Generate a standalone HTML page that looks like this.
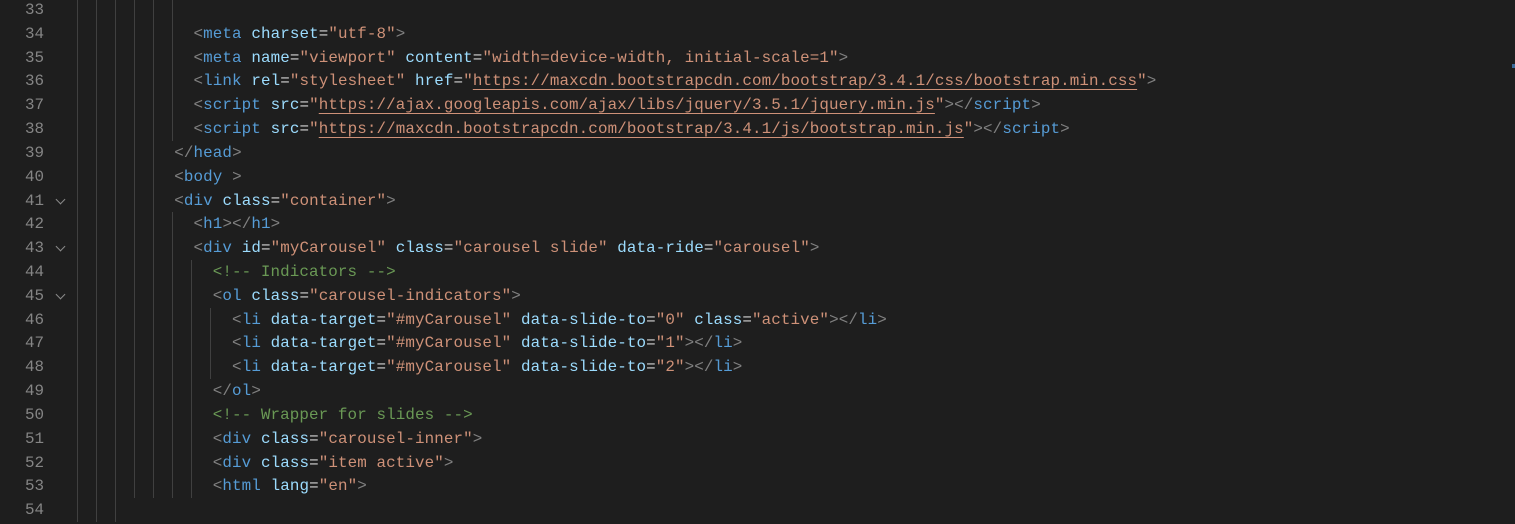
<!DOCTYPE html>
<html><head><meta charset="utf-8"><style>
body{margin:0;width:1515px;height:524px;background:#1e1e1e;overflow:hidden;position:relative;font-family:"Liberation Mono",monospace;font-size:15.87px}
.ln{position:absolute;left:0;width:44px;text-align:right;color:#858585;height:24px;line-height:24px}
.c{position:absolute;left:78px;white-space:pre;height:24px;line-height:24px;color:#d4d4d4;letter-spacing:0.11px}
.g{position:absolute;width:1px;background:#404040}
.b{color:#808080}.t{color:#569cd6}.a{color:#9cdcfe}.s{color:#ce9178}.m{color:#6a9955}
.u{text-decoration:underline;text-decoration-color:#ce9178;text-underline-offset:4px}
.f{position:absolute;left:57px;width:6px;height:6px;border-right:1.3px solid #8a8a8a;border-bottom:1.3px solid #8a8a8a;transform:rotate(45deg)}
</style></head><body>
<div id="root"></div>
<script>
const lines={
33:[6,''],
34:[6,'            <span class=b>&lt;</span><span class=t>meta</span> <span class=a>charset</span>=<span class=s>"utf-8"</span><span class=b>&gt;</span>'],
35:[6,'            <span class=b>&lt;</span><span class=t>meta</span> <span class=a>name</span>=<span class=s>"viewport"</span> <span class=a>content</span>=<span class=s>"width=device-width, initial-scale=1"</span><span class=b>&gt;</span>'],
36:[6,'            <span class=b>&lt;</span><span class=t>link</span> <span class=a>rel</span>=<span class=s>"stylesheet"</span> <span class=a>href</span>=<span class=s>"<span class=u>https://maxcdn.bootstrapcdn.com/bootstrap/3.4.1/css/bootstrap.min.css</span>"</span><span class=b>&gt;</span>'],
37:[6,'            <span class=b>&lt;</span><span class=t>script</span> <span class=a>src</span>=<span class=s>"<span class=u>https://ajax.googleapis.com/ajax/libs/jquery/3.5.1/jquery.min.js</span>"</span><span class=b>&gt;&lt;/</span><span class=t>script</span><span class=b>&gt;</span>'],
38:[6,'            <span class=b>&lt;</span><span class=t>script</span> <span class=a>src</span>=<span class=s>"<span class=u>https://maxcdn.bootstrapcdn.com/bootstrap/3.4.1/js/bootstrap.min.js</span>"</span><span class=b>&gt;&lt;/</span><span class=t>script</span><span class=b>&gt;</span>'],
39:[5,'          <span class=b>&lt;/</span><span class=t>head</span><span class=b>&gt;</span>'],
40:[5,'          <span class=b>&lt;</span><span class=t>body</span> <span class=b>&gt;</span>'],
41:[5,'          <span class=b>&lt;</span><span class=t>div</span> <span class=a>class</span>=<span class=s>"container"</span><span class=b>&gt;</span>'],
42:[6,'            <span class=b>&lt;</span><span class=t>h1</span><span class=b>&gt;&lt;/</span><span class=t>h1</span><span class=b>&gt;</span>'],
43:[6,'            <span class=b>&lt;</span><span class=t>div</span> <span class=a>id</span>=<span class=s>"myCarousel"</span> <span class=a>class</span>=<span class=s>"carousel slide"</span> <span class=a>data-ride</span>=<span class=s>"carousel"</span><span class=b>&gt;</span>'],
44:[7,'              <span class=m>&lt;!-- Indicators --&gt;</span>'],
45:[7,'              <span class=b>&lt;</span><span class=t>ol</span> <span class=a>class</span>=<span class=s>"carousel-indicators"</span><span class=b>&gt;</span>'],
46:[8,'                <span class=b>&lt;</span><span class=t>li</span> <span class=a>data-target</span>=<span class=s>"#myCarousel"</span> <span class=a>data-slide-to</span>=<span class=s>"0"</span> <span class=a>class</span>=<span class=s>"active"</span><span class=b>&gt;&lt;/</span><span class=t>li</span><span class=b>&gt;</span>'],
47:[8,'                <span class=b>&lt;</span><span class=t>li</span> <span class=a>data-target</span>=<span class=s>"#myCarousel"</span> <span class=a>data-slide-to</span>=<span class=s>"1"</span><span class=b>&gt;&lt;/</span><span class=t>li</span><span class=b>&gt;</span>'],
48:[8,'                <span class=b>&lt;</span><span class=t>li</span> <span class=a>data-target</span>=<span class=s>"#myCarousel"</span> <span class=a>data-slide-to</span>=<span class=s>"2"</span><span class=b>&gt;&lt;/</span><span class=t>li</span><span class=b>&gt;</span>'],
49:[7,'              <span class=b>&lt;/</span><span class=t>ol</span><span class=b>&gt;</span>'],
50:[7,'              <span class=m>&lt;!-- Wrapper for slides --&gt;</span>'],
51:[7,'              <span class=b>&lt;</span><span class=t>div</span> <span class=a>class</span>=<span class=s>"carousel-inner"</span><span class=b>&gt;</span>'],
52:[7,'              <span class=b>&lt;</span><span class=t>div</span> <span class=a>class</span>=<span class=s>"item active"</span><span class=b>&gt;</span>'],
53:[7,'              <span class=b>&lt;</span><span class=t>html</span> <span class=a>lang</span>=<span class=s>"en"</span><span class=b>&gt;</span>'],
54:[3,'']};
let h='';
for(const k in lines){const i=+k-33;const top=-2+i*23.82;const [g,c]=lines[k];
h+=`<div class=ln style="top:${top}px">${k}</div>`;
for(let j=0;j<g;j++)h+=`<div class=g style="left:${Math.round(77+19.05*j)}px;top:${top}px;height:24px"></div>`;
h+=`<div class=c style="top:${top}px">${c}</div>`;
if([41,43,45].includes(+k))h+=`<div class=f style="top:${top+7}px"></div>`;}
h+='<div style="position:absolute;left:1512px;top:64px;width:3px;height:4px;background:#3a6b9a"></div>';
document.getElementById('root').innerHTML=h;
</script>
</body></html>
